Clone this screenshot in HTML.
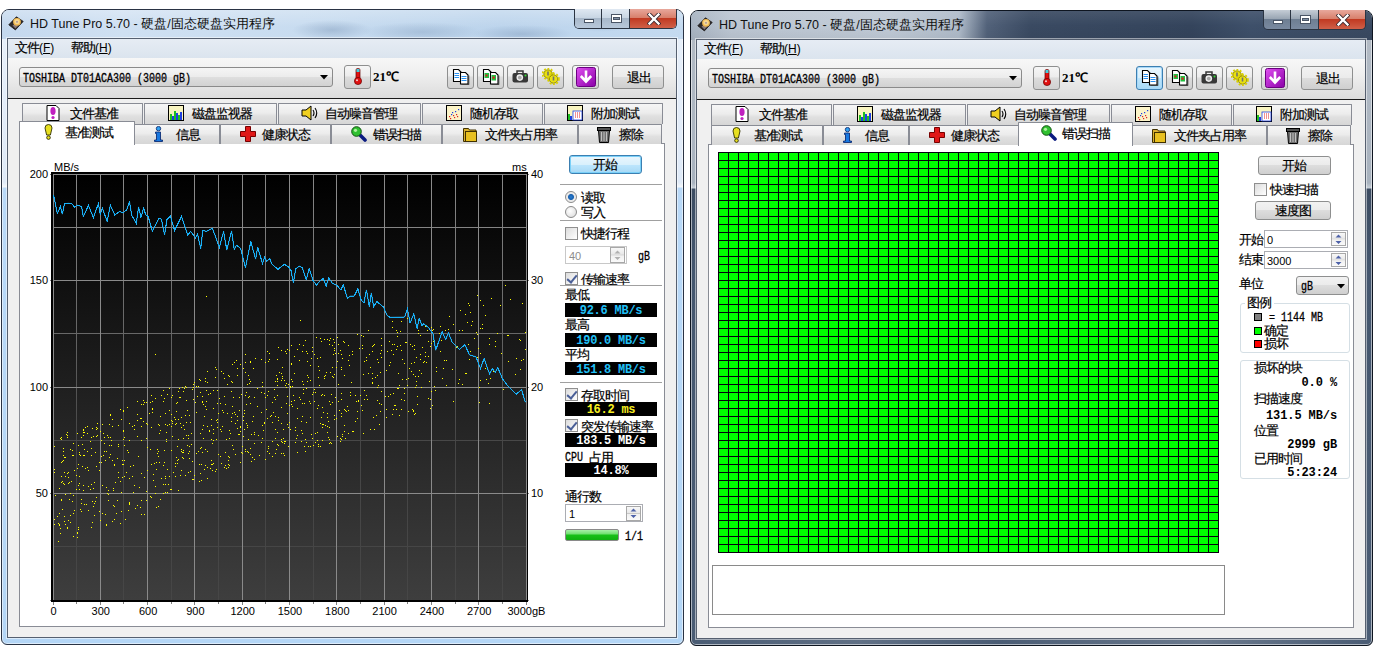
<!DOCTYPE html><html><head><meta charset="utf-8"><style>

*{box-sizing:border-box;margin:0;padding:0}
html,body{width:1385px;height:657px;overflow:hidden;background:#fff;font-family:"Liberation Sans",sans-serif;font-size:12px;color:#000}
.a{position:absolute}
.win{position:absolute;left:0;top:0;width:1385px;height:657px}
.frame{position:absolute;left:1px;top:9px;width:683px;height:636px;border:1px solid #1d2633;border-radius:8px 8px 6px 6px;overflow:hidden;box-shadow:inset 0 0 0 1px rgba(255,255,255,0.55)}
.client{position:absolute;left:7px;top:38px;width:670px;height:600px;border:1px solid #566070;background:#f0f0f0;box-shadow:0 0 0 1px rgba(255,255,255,0.5)}
.cj{font-family:"Liberation Sans",sans-serif;font-size:13px;line-height:12px;letter-spacing:-1px;white-space:nowrap;-webkit-text-stroke:0.2px #000}
.as{font-size:12px;letter-spacing:0;-webkit-text-stroke:0}
.mono{font-family:"Liberation Mono",monospace;white-space:nowrap}
.tbtn{position:absolute;height:24px;width:27px;border:1px solid #8e8f8f;border-radius:3px;background:linear-gradient(#f6f6f6 0%,#ececec 45%,#dcdcdc 50%,#d0d0d0 100%)}
.btn{position:absolute;border:1px solid #707070;border-radius:3px;background:linear-gradient(#f2f2f2 0%,#ebebeb 49%,#dddddd 50%,#cfcfcf 100%);text-align:center}
.tab{position:absolute;border:1px solid #898c95;border-bottom:none;background:linear-gradient(#f6f6f6 0%,#ececec 45%,#e0e0e0 60%,#d6d6d6 100%);border-radius:1px 1px 0 0}
.tab.sel{background:#fff}
.panel{position:absolute;border:1px solid #898c95;background:#fff}
.blk{position:absolute;background:#000;font-family:"Liberation Mono",monospace;font-weight:bold;font-size:12px;line-height:16px;letter-spacing:-0.25px;text-align:center;white-space:pre;overflow:hidden}
.chk{position:absolute;width:13px;height:13px;border:1px solid #8f8f8f;background:linear-gradient(135deg,#dcdcdc,#fff)}
.chk.on::after{content:"";position:absolute;left:3px;top:0px;width:4px;height:8px;border:solid #4a5f97;border-width:0 2px 2px 0;transform:rotate(40deg)}
.sep{position:absolute;height:2px;background:#a0a0a0;border-bottom:1px solid #fff}
.edit{position:absolute;border:1px solid #abadb3;background:#fff}
.spin{position:absolute;width:15px;background:linear-gradient(#f4f4f4,#dedede);border-left:1px solid #c0c0c0}

</style></head><body>
<div class="win" style="left:0px;top:0px">
<div class="frame" style="border-color:#2a3344;background:linear-gradient(#e8f0fa 0px,#dfeaf8 172px,#f4f8fc 177px,#b9d9f8 178px,#b4d6f6 100%)">
<div class="a" style="left:0;top:0;width:681px;height:29px;background:radial-gradient(ellipse 40px 10px at 330px 20px,rgba(80,110,150,0.28),rgba(80,110,150,0)),radial-gradient(ellipse 60px 10px at 420px 22px,rgba(80,110,150,0.22),rgba(80,110,150,0)),radial-gradient(ellipse 50px 9px at 520px 24px,rgba(80,110,150,0.25),rgba(80,110,150,0)),radial-gradient(ellipse 30px 8px at 600px 14px,rgba(80,110,150,0.2),rgba(80,110,150,0)),linear-gradient(rgba(255,255,255,0.25),rgba(255,255,255,0) 60%),linear-gradient(90deg,#c4d8ee 0,#cfe0f2 120px,#c8dcf0 300px,#bcd4ec 500px,#c4daf0 100%)"></div>
</div>
<div class="a" style="left:574px;top:9px;width:103px;height:20px;border:1px solid #2b3442;border-top:none;border-radius:0 0 5px 5px;overflow:hidden;z-index:5">
<div class="a" style="left:0;top:0;width:27px;height:19px;background:linear-gradient(#dfe8f2 0%,#c9d6e4 45%,#a8b8ca 50%,#b8c8da 100%);border-right:1px solid #2b3442"></div>
<div class="a" style="left:27px;top:0;width:28px;height:19px;background:linear-gradient(#dfe8f2 0%,#c9d6e4 45%,#a8b8ca 50%,#b8c8da 100%);border-right:1px solid #2b3442"></div>
<div class="a" style="left:55px;top:0;width:47px;height:19px;background:linear-gradient(#e8a89c 0%,#d8806c 45%,#c13a22 50%,#d06048 100%)"></div>
<div class="a" style="left:9px;top:10px;width:10px;height:4px;background:#fff;border:1px solid #4a5566"></div>
<div class="a" style="left:36px;top:5px;width:11px;height:9px;border:1px solid #4a5566;background:#fff"><div class="a" style="left:1px;top:2px;width:7px;height:3px;background:#8090a4;border:1px solid #4a5566"></div></div>
<svg class="a" style="left:72px;top:4px" width="14" height="12" viewBox="0 0 14 12"><path d="M2.5,1.5 L11.5,10.5 M11.5,1.5 L2.5,10.5" stroke="#3a2a30" stroke-width="4" stroke-linecap="square"/><path d="M2.5,1.5 L11.5,10.5 M11.5,1.5 L2.5,10.5" stroke="#fff" stroke-width="2.4" stroke-linecap="square"/></svg>
</div>
<svg class="a" style="left:8px;top:16px" width="16" height="15" viewBox="0 0 16 15">
<polygon points="8.4,0.8 15.2,5.4 7.4,13.9 0.8,8.8" fill="#2e2a2a" stroke="#1a1818" stroke-width="0.8" stroke-linejoin="round"/>
<polygon points="4.5,9.5 8,7.5 10,10 7.4,12.6" fill="#8a7a78"/>
<circle cx="9" cy="5.8" r="3.9" fill="#f0b850"/>
<circle cx="9" cy="5.6" r="2.6" fill="#f8d890"/>
<circle cx="9" cy="5.8" r="0.9" fill="#9a8aa0"/>
</svg>
<div class="a" style="left:30px;top:17px;white-space:nowrap;line-height:14px;color:#111"><span style="font-size:12.5px">HD Tune Pro 5.70 - </span><span style="font-size:12.5px">硬盘/固态硬盘实用程序</span></div>
<div class="client"></div>
<div class="a" style="left:8px;top:39px;width:668px;height:19px;background:linear-gradient(#e6ecf4,#dbe4ee)"></div>
<div class="a cj" style="left:15px;top:42px;">文件<span class="as">(</span><u><span class="as">F</span></u><span class="as">)</span></div>
<div class="a cj" style="left:71px;top:42px;">帮助<span class="as">(</span><u><span class="as">H</span></u><span class="as">)</span></div>
<div class="a" style="left:8px;top:58px;width:668px;height:41px;background:linear-gradient(#f7f7f7 0%,#efefef 40%,#dcdcdc 100%);border-bottom:1px solid #1a1a1a"></div>
<div class="a" style="left:19px;top:67px;width:314px;height:20px;border:1px solid #8b8b8b;border-radius:3px;background:linear-gradient(#f5f5f5 0%,#ececec 48%,#dedede 52%,#d2d2d2 100%)"></div>
<div class="a mono" style="left:23px;top:73px;font-size:12px;line-height:12px;transform:scaleX(0.833);transform-origin:0 0;letter-spacing:0px;-webkit-text-stroke:0.3px #000">TOSHIBA DT01ACA300 (3000 gB)</div>
<svg class="a" style="left:320px;top:75px" width="8" height="5"><path d="M0,0h8l-4,4.5z" fill="#000"/></svg>
<div class="tbtn" style="left:344px;top:65px"></div>
<svg class="a" style="left:353px;top:68px" width="10" height="17" viewBox="0 0 10 17">
<rect x="3" y="0.5" width="4" height="12" rx="1.5" fill="#e01010" stroke="#600" stroke-width="0.7"/>
<rect x="3.5" y="1" width="3" height="3" fill="#40d0e0"/>
<circle cx="5" cy="13" r="3.6" fill="#e01010" stroke="#600" stroke-width="0.7"/>
<circle cx="4" cy="12.3" r="1" fill="#fff" opacity="0.8"/>
</svg>
<div class="a" style="left:373px;top:70px;font-family:'Liberation Serif',serif;font-weight:bold;font-size:13px;line-height:13px">21℃</div>
<div class="tbtn" style="left:447px;top:65px;"></div>
<div class="tbtn" style="left:477px;top:65px;"></div>
<div class="tbtn" style="left:507px;top:65px;"></div>
<div class="tbtn" style="left:537px;top:65px;"></div>
<div class="tbtn" style="left:572px;top:65px;"></div>
<svg class="a" style="left:452px;top:68px" width="18" height="17" viewBox="0 0 18 17">
<path d="M1.5,1.5h5l2.5,2.5v9.5h-7.5z" fill="#fff" stroke="#000" stroke-width="1.1"/>
<path d="M8.5,4.5h5l2.5,2.5v9h-7.5z" fill="#fff" stroke="#000" stroke-width="1.1"/>
<path d="M16.8,7.5v9.2h-7.5" stroke="#303030" stroke-width="0.9" fill="none"/>
<path d="M2.5,5.5h4.5M2.5,7.5h4.5M2.5,9.5h4.5M9.5,8.5h5M9.5,10.5h5M9.5,12.5h5" stroke="#2890f0" stroke-width="1.1" fill="none"/>
</svg>
<svg class="a" style="left:482px;top:68px" width="18" height="17" viewBox="0 0 18 17">
<path d="M1.5,1.5h5l2.5,2.5v9.5h-7.5z" fill="#fff" stroke="#000" stroke-width="1.1"/>
<path d="M8.5,4.5h5l2.5,2.5v9h-7.5z" fill="#fff" stroke="#000" stroke-width="1.1"/>
<path d="M16.8,7.5v9.2h-7.5" stroke="#303030" stroke-width="0.9" fill="none"/>
<rect x="2.5" y="5" width="4.5" height="5" fill="#20c040"/><rect x="3.5" y="6.5" width="2" height="2" fill="#e02020"/><rect x="9.5" y="7" width="4.5" height="5.5" fill="#20c040"/><rect x="10.5" y="8.5" width="2.2" height="2.2" fill="#e02020"/>
</svg>
<svg class="a" style="left:512px;top:69px" width="17" height="14" viewBox="0 0 17 14">
<rect x="0.5" y="4" width="15.5" height="9.5" rx="2" fill="#383838"/>
<path d="M5,4.5v-2.5h6v2.5" stroke="#383838" stroke-width="1.5" fill="none"/>
<circle cx="7.8" cy="8.6" r="3.3" fill="#f0f0f0"/><circle cx="7.8" cy="8.6" r="1.9" fill="#a8a8a8"/>
<circle cx="13.5" cy="6.5" r="1" fill="#30e030"/>
</svg>
<svg class="a" style="left:542px;top:68px" width="18" height="17" viewBox="0 0 18 17">
<circle cx="6" cy="6" r="4.2" fill="#e8e010" stroke="#7a7000" stroke-width="0.8"/>
<circle cx="6" cy="6" r="5.3" fill="none" stroke="#d8d000" stroke-width="2" stroke-dasharray="1.8 1.6"/>
<circle cx="11.5" cy="11" r="4.2" fill="#e8e010" stroke="#7a7000" stroke-width="0.8"/>
<circle cx="11.5" cy="11" r="5.3" fill="none" stroke="#d8d000" stroke-width="2" stroke-dasharray="1.8 1.6"/>
<path d="M6,3.5v4M11.5,8.5v4" stroke="#707070" stroke-width="1.6"/>
</svg>
<svg class="a" style="left:576px;top:67px" width="20" height="20" viewBox="0 0 20 20">
<defs><linearGradient id="pg" x1="0" y1="0" x2="1" y2="1"><stop offset="0" stop-color="#e050f0"/><stop offset="1" stop-color="#8a00a8"/></linearGradient></defs>
<rect x="0.5" y="0.5" width="19" height="19" rx="2" fill="url(#pg)" stroke="#6a0080"/>
<path d="M10,3.5v10.5M4.8,9l5.2,5.5l5.2,-5.5" stroke="#fff" stroke-width="2.6" fill="none" stroke-linejoin="miter"/>
</svg>
<div class="btn" style="left:612px;top:65px;width:52px;height:24px;border-color:#8e8f8f"></div>
<div class="a cj" style="left:627px;top:71px;font-size:13px;line-height:13px">退出</div>
<div class="tab" style="left:22px;top:103px;width:121px;height:21px"></div>
<svg class="a" style="left:46px;top:105px" width="14" height="16" viewBox="0 0 14 16">
<path d="M1,0.5h9l3,3v12H1z" fill="#fff" stroke="#000"/>
<ellipse cx="7" cy="6" rx="2.6" ry="4" fill="#c020c0"/><circle cx="7" cy="12.5" r="1.6" fill="#c020c0"/>
</svg>
<div class="a cj" style="left:70px;top:108px;">文件基准</div>
<div class="tab" style="left:144px;top:103px;width:133px;height:21px"></div>
<svg class="a" style="left:168px;top:105px" width="16" height="16" viewBox="0 0 16 16">
<rect x="0.5" y="0.5" width="15" height="15" fill="#f8f4c0" stroke="#000"/>
<rect x="2" y="9" width="2" height="6" fill="#20c020"/><rect x="4" y="11" width="2" height="4" fill="#2040e0"/>
<rect x="6" y="6" width="2" height="9" fill="#20c020"/><rect x="8" y="8" width="2" height="7" fill="#2040e0"/>
<rect x="10" y="10" width="2" height="5" fill="#20c020"/><rect x="12" y="7" width="2" height="8" fill="#2040e0"/>
</svg>
<div class="a cj" style="left:192px;top:108px;">磁盘监视器</div>
<div class="tab" style="left:278px;top:103px;width:143px;height:21px"></div>
<svg class="a" style="left:301px;top:105px" width="17" height="16" viewBox="0 0 17 16">
<path d="M1,5h4l5,-4v14l-5,-4H1z" fill="#f0d020" stroke="#000" stroke-width="1"/>
<path d="M12,5q2,3 0,6M14,3q3.5,5 0,10" stroke="#000" stroke-width="1.1" fill="none"/>
</svg>
<div class="a cj" style="left:325px;top:108px;">自动噪音管理</div>
<div class="tab" style="left:422px;top:103px;width:121px;height:21px"></div>
<svg class="a" style="left:446px;top:105px" width="16" height="16" viewBox="0 0 16 16">
<rect x="0.5" y="0.5" width="15" height="15" fill="#fbf3c8" stroke="#000"/><rect x="3" y="11" width="1.2" height="1.2" fill="#e02020"/><rect x="5" y="9" width="1.2" height="1.2" fill="#2040e0"/><rect x="7" y="10" width="1.2" height="1.2" fill="#e02020"/><rect x="9" y="6" width="1.2" height="1.2" fill="#2040e0"/><rect x="10" y="9" width="1.2" height="1.2" fill="#e02020"/><rect x="12" y="4" width="1.2" height="1.2" fill="#2040e0"/><rect x="4" y="13" width="1.2" height="1.2" fill="#e02020"/><rect x="8" y="12" width="1.2" height="1.2" fill="#e02020"/><rect x="11" y="11" width="1.2" height="1.2" fill="#e02020"/><rect x="6" y="7" width="1.2" height="1.2" fill="#2040e0"/>
</svg>
<div class="a cj" style="left:470px;top:108px;">随机存取</div>
<div class="tab" style="left:544px;top:103px;width:119px;height:21px"></div>
<svg class="a" style="left:567px;top:105px" width="16" height="16" viewBox="0 0 16 16">
<rect x="0.5" y="0.5" width="15" height="15" fill="#f8f4c0" stroke="#000"/>
<rect x="1" y="9" width="2" height="6" fill="#20c020"/><rect x="3" y="11" width="2" height="4" fill="#2040e0"/>
<rect x="6" y="6" width="9" height="9" fill="#fff" stroke="#2040e0" stroke-width="0.8"/>
<path d="M8,8h1M10,8h1M12,8h1M8,10h1M10,10h1M12,10h1M8,12h1M10,12h1M12,12h1" stroke="#e02020" stroke-width="1"/>
</svg>
<div class="a cj" style="left:591px;top:108px;">附加测试</div>
<div class="panel" style="left:19px;top:143px;width:646px;height:484px"></div>
<svg class="a" style="left:0;top:0" width="680" height="657" viewBox="0 0 680 657">
<defs><linearGradient id="bg" x1="0" y1="0" x2="0" y2="1"><stop offset="0" stop-color="#000"/><stop offset="1" stop-color="#3e3e3e"/></linearGradient><linearGradient id="mg" gradientUnits="userSpaceOnUse" x1="0" y1="174" x2="0" y2="600"><stop offset="0" stop-color="#888888"/><stop offset="0.35" stop-color="#686868"/><stop offset="0.62" stop-color="#464646"/><stop offset="1" stop-color="#464646"/></linearGradient></defs>
<rect x="51" y="172" width="477" height="430" fill="#000"/>
<rect x="53" y="174" width="473" height="426" fill="url(#bg)"/>
<line x1="76.5" y1="174" x2="76.5" y2="600" stroke="url(#mg)" stroke-width="1"/>
<line x1="123.5" y1="174" x2="123.5" y2="600" stroke="url(#mg)" stroke-width="1"/>
<line x1="171.5" y1="174" x2="171.5" y2="600" stroke="url(#mg)" stroke-width="1"/>
<line x1="218.5" y1="174" x2="218.5" y2="600" stroke="url(#mg)" stroke-width="1"/>
<line x1="265.5" y1="174" x2="265.5" y2="600" stroke="url(#mg)" stroke-width="1"/>
<line x1="313.5" y1="174" x2="313.5" y2="600" stroke="url(#mg)" stroke-width="1"/>
<line x1="360.5" y1="174" x2="360.5" y2="600" stroke="url(#mg)" stroke-width="1"/>
<line x1="407.5" y1="174" x2="407.5" y2="600" stroke="url(#mg)" stroke-width="1"/>
<line x1="455.5" y1="174" x2="455.5" y2="600" stroke="url(#mg)" stroke-width="1"/>
<line x1="502.5" y1="174" x2="502.5" y2="600" stroke="url(#mg)" stroke-width="1"/>
<line x1="53" y1="227.5" x2="526" y2="227.5" stroke="#848484" stroke-width="1"/>
<line x1="53" y1="333.5" x2="526" y2="333.5" stroke="#686868" stroke-width="1"/>
<line x1="53" y1="440.5" x2="526" y2="440.5" stroke="#484848" stroke-width="1"/>
<line x1="53" y1="546.5" x2="526" y2="546.5" stroke="#464646" stroke-width="1"/>
<line x1="53.5" y1="174" x2="53.5" y2="600" stroke="#8a8a8a" stroke-width="1"/>
<line x1="100.5" y1="174" x2="100.5" y2="600" stroke="#8a8a8a" stroke-width="1"/>
<line x1="147.5" y1="174" x2="147.5" y2="600" stroke="#8a8a8a" stroke-width="1"/>
<line x1="194.5" y1="174" x2="194.5" y2="600" stroke="#8a8a8a" stroke-width="1"/>
<line x1="242.5" y1="174" x2="242.5" y2="600" stroke="#8a8a8a" stroke-width="1"/>
<line x1="289.5" y1="174" x2="289.5" y2="600" stroke="#8a8a8a" stroke-width="1"/>
<line x1="336.5" y1="174" x2="336.5" y2="600" stroke="#8a8a8a" stroke-width="1"/>
<line x1="384.5" y1="174" x2="384.5" y2="600" stroke="#8a8a8a" stroke-width="1"/>
<line x1="431.5" y1="174" x2="431.5" y2="600" stroke="#8a8a8a" stroke-width="1"/>
<line x1="478.5" y1="174" x2="478.5" y2="600" stroke="#8a8a8a" stroke-width="1"/>
<line x1="526.5" y1="174" x2="526.5" y2="600" stroke="#8a8a8a" stroke-width="1"/>
<line x1="53" y1="174.5" x2="527" y2="174.5" stroke="#8a8a8a" stroke-width="1"/>
<line x1="53" y1="280.5" x2="527" y2="280.5" stroke="#8a8a8a" stroke-width="1"/>
<line x1="53" y1="387.5" x2="527" y2="387.5" stroke="#8a8a8a" stroke-width="1"/>
<line x1="53" y1="493.5" x2="527" y2="493.5" stroke="#8a8a8a" stroke-width="1"/>
<line x1="53" y1="600.5" x2="527" y2="600.5" stroke="#8a8a8a" stroke-width="1"/>
<line x1="53.5" y1="602" x2="53.5" y2="605" stroke="#808080" stroke-width="1"/>
<line x1="76.5" y1="602" x2="76.5" y2="604" stroke="#808080" stroke-width="1"/>
<line x1="100.5" y1="602" x2="100.5" y2="605" stroke="#808080" stroke-width="1"/>
<line x1="123.5" y1="602" x2="123.5" y2="604" stroke="#808080" stroke-width="1"/>
<line x1="147.5" y1="602" x2="147.5" y2="605" stroke="#808080" stroke-width="1"/>
<line x1="171.5" y1="602" x2="171.5" y2="604" stroke="#808080" stroke-width="1"/>
<line x1="194.5" y1="602" x2="194.5" y2="605" stroke="#808080" stroke-width="1"/>
<line x1="218.5" y1="602" x2="218.5" y2="604" stroke="#808080" stroke-width="1"/>
<line x1="242.5" y1="602" x2="242.5" y2="605" stroke="#808080" stroke-width="1"/>
<line x1="265.5" y1="602" x2="265.5" y2="604" stroke="#808080" stroke-width="1"/>
<line x1="289.5" y1="602" x2="289.5" y2="605" stroke="#808080" stroke-width="1"/>
<line x1="313.5" y1="602" x2="313.5" y2="604" stroke="#808080" stroke-width="1"/>
<line x1="336.5" y1="602" x2="336.5" y2="605" stroke="#808080" stroke-width="1"/>
<line x1="360.5" y1="602" x2="360.5" y2="604" stroke="#808080" stroke-width="1"/>
<line x1="384.5" y1="602" x2="384.5" y2="605" stroke="#808080" stroke-width="1"/>
<line x1="407.5" y1="602" x2="407.5" y2="604" stroke="#808080" stroke-width="1"/>
<line x1="431.5" y1="602" x2="431.5" y2="605" stroke="#808080" stroke-width="1"/>
<line x1="455.5" y1="602" x2="455.5" y2="604" stroke="#808080" stroke-width="1"/>
<line x1="478.5" y1="602" x2="478.5" y2="605" stroke="#808080" stroke-width="1"/>
<line x1="502.5" y1="602" x2="502.5" y2="604" stroke="#808080" stroke-width="1"/>
<line x1="526.5" y1="602" x2="526.5" y2="605" stroke="#808080" stroke-width="1"/>
<line x1="50" y1="174.5" x2="51" y2="174.5" stroke="#808080" stroke-width="1"/>
<line x1="528" y1="174.5" x2="529" y2="174.5" stroke="#808080" stroke-width="1"/>
<line x1="50" y1="280.5" x2="51" y2="280.5" stroke="#808080" stroke-width="1"/>
<line x1="528" y1="280.5" x2="529" y2="280.5" stroke="#808080" stroke-width="1"/>
<line x1="50" y1="387.5" x2="51" y2="387.5" stroke="#808080" stroke-width="1"/>
<line x1="528" y1="387.5" x2="529" y2="387.5" stroke="#808080" stroke-width="1"/>
<line x1="50" y1="493.5" x2="51" y2="493.5" stroke="#808080" stroke-width="1"/>
<line x1="528" y1="493.5" x2="529" y2="493.5" stroke="#808080" stroke-width="1"/>
<line x1="50" y1="600.5" x2="51" y2="600.5" stroke="#808080" stroke-width="1"/>
<line x1="528" y1="600.5" x2="529" y2="600.5" stroke="#808080" stroke-width="1"/>
<rect x="51" y="172" width="477" height="2" fill="#000"/>
<rect x="51" y="600" width="477" height="2" fill="#000"/>
<rect x="51" y="172" width="2" height="430" fill="#000"/>
<rect x="527" y="172" width="1" height="430" fill="#000"/>
<path d="M267,451h1v1h-1zM273,412h1v1h-1zM141,473h1v1h-1zM428,341h1v1h-1zM96,497h1v1h-1zM73,536h1v1h-1zM362,345h1v1h-1zM61,439h1v1h-1zM143,400h1v1h-1zM272,441h1v1h-1zM299,397h1v1h-1zM366,357h1v1h-1zM202,402h1v1h-1zM87,467h1v1h-1zM453,401h1v1h-1zM453,324h1v1h-1zM88,510h1v1h-1zM181,417h1v1h-1zM109,424h1v1h-1zM82,444h1v1h-1zM317,358h1v1h-1zM399,385h1v1h-1zM108,437h1v1h-1zM181,470h1v1h-1zM197,396h1v1h-1zM240,426h1v1h-1zM101,440h1v1h-1zM175,419h1v1h-1zM193,384h1v1h-1zM329,401h1v1h-1zM229,465h1v1h-1zM282,442h1v1h-1zM140,507h1v1h-1zM440,326h1v1h-1zM146,500h1v1h-1zM338,344h1v1h-1zM72,455h1v1h-1zM386,409h1v1h-1zM335,353h1v1h-1zM394,344h1v1h-1zM318,405h1v1h-1zM186,400h1v1h-1zM61,482h1v1h-1zM82,466h1v1h-1zM324,376h1v1h-1zM364,390h1v1h-1zM120,409h1v1h-1zM508,361h1v1h-1zM281,380h1v1h-1zM525,349h1v1h-1zM401,399h1v1h-1zM485,368h1v1h-1zM250,448h1v1h-1zM324,378h1v1h-1zM329,344h1v1h-1zM237,420h1v1h-1zM261,359h1v1h-1zM408,378h1v1h-1zM281,423h1v1h-1zM288,446h1v1h-1zM174,417h1v1h-1zM374,344h1v1h-1zM262,386h1v1h-1zM368,373h1v1h-1zM469,359h1v1h-1zM203,425h1v1h-1zM184,429h1v1h-1zM183,425h1v1h-1zM349,365h1v1h-1zM267,351h1v1h-1zM465,373h1v1h-1zM323,424h1v1h-1zM63,483h1v1h-1zM65,457h1v1h-1zM120,481h1v1h-1zM264,422h1v1h-1zM377,375h1v1h-1zM138,456h1v1h-1zM391,350h1v1h-1zM217,422h1v1h-1zM344,375h1v1h-1zM95,501h1v1h-1zM115,482h1v1h-1zM322,424h1v1h-1zM361,405h1v1h-1zM392,414h1v1h-1zM307,375h1v1h-1zM218,413h1v1h-1zM313,392h1v1h-1zM67,437h1v1h-1zM431,343h1v1h-1zM425,326h1v1h-1zM297,435h1v1h-1zM286,353h1v1h-1zM158,424h1v1h-1zM398,373h1v1h-1zM201,464h1v1h-1zM479,387h1v1h-1zM324,395h1v1h-1zM291,345h1v1h-1zM243,416h1v1h-1zM285,351h1v1h-1zM308,446h1v1h-1zM489,344h1v1h-1zM113,505h1v1h-1zM203,438h1v1h-1zM490,378h1v1h-1zM64,457h1v1h-1zM378,362h1v1h-1zM346,411h1v1h-1zM111,440h1v1h-1zM147,447h1v1h-1zM231,417h1v1h-1zM129,478h1v1h-1zM355,421h1v1h-1zM342,358h1v1h-1zM480,328h1v1h-1zM489,403h1v1h-1zM472,321h1v1h-1zM396,330h1v1h-1zM446,385h1v1h-1zM113,490h1v1h-1zM62,509h1v1h-1zM108,500h1v1h-1zM291,363h1v1h-1zM87,426h1v1h-1zM314,401h1v1h-1zM123,430h1v1h-1zM491,298h1v1h-1zM414,362h1v1h-1zM297,408h1v1h-1zM60,528h1v1h-1zM139,487h1v1h-1zM245,372h1v1h-1zM295,442h1v1h-1zM244,410h1v1h-1zM175,466h1v1h-1zM245,451h1v1h-1zM381,404h1v1h-1zM245,362h1v1h-1zM215,367h1v1h-1zM221,431h1v1h-1zM163,465h1v1h-1zM213,429h1v1h-1zM305,451h1v1h-1zM357,411h1v1h-1zM516,358h1v1h-1zM402,359h1v1h-1zM77,468h1v1h-1zM100,520h1v1h-1zM313,445h1v1h-1zM322,407h1v1h-1zM436,367h1v1h-1zM412,409h1v1h-1zM129,423h1v1h-1zM287,349h1v1h-1zM302,381h1v1h-1zM188,438h1v1h-1zM187,410h1v1h-1zM60,438h1v1h-1zM127,450h1v1h-1zM77,533h1v1h-1zM88,470h1v1h-1zM279,372h1v1h-1zM301,421h1v1h-1zM275,438h1v1h-1zM338,401h1v1h-1zM269,353h1v1h-1zM303,389h1v1h-1zM369,354h1v1h-1zM328,421h1v1h-1zM304,446h1v1h-1zM400,331h1v1h-1zM348,360h1v1h-1zM377,387h1v1h-1zM352,351h1v1h-1zM171,489h1v1h-1zM468,303h1v1h-1zM181,449h1v1h-1zM102,424h1v1h-1zM94,482h1v1h-1zM351,382h1v1h-1zM153,480h1v1h-1zM449,316h1v1h-1zM416,357h1v1h-1zM175,424h1v1h-1zM207,451h1v1h-1zM228,456h1v1h-1zM91,484h1v1h-1zM282,378h1v1h-1zM420,335h1v1h-1zM366,360h1v1h-1zM396,349h1v1h-1zM121,492h1v1h-1zM226,439h1v1h-1zM322,440h1v1h-1zM433,341h1v1h-1zM242,453h1v1h-1zM171,426h1v1h-1zM225,404h1v1h-1zM146,491h1v1h-1zM309,401h1v1h-1zM137,505h1v1h-1zM186,435h1v1h-1zM310,446h1v1h-1zM361,335h1v1h-1zM312,347h1v1h-1zM92,522h1v1h-1zM93,436h1v1h-1zM406,342h1v1h-1zM158,451h1v1h-1zM414,349h1v1h-1zM287,424h1v1h-1zM247,427h1v1h-1zM301,430h1v1h-1zM253,368h1v1h-1zM231,381h1v1h-1zM254,459h1v1h-1zM81,437h1v1h-1zM359,348h1v1h-1zM83,490h1v1h-1zM483,305h1v1h-1zM141,426h1v1h-1zM392,344h1v1h-1zM141,418h1v1h-1zM411,371h1v1h-1zM439,333h1v1h-1zM215,471h1v1h-1zM281,350h1v1h-1zM235,414h1v1h-1zM183,452h1v1h-1zM166,441h1v1h-1zM229,438h1v1h-1zM340,350h1v1h-1zM205,465h1v1h-1zM297,452h1v1h-1zM179,397h1v1h-1zM417,396h1v1h-1zM92,501h1v1h-1zM99,470h1v1h-1zM458,383h1v1h-1zM250,362h1v1h-1zM444,360h1v1h-1zM302,433h1v1h-1zM200,380h1v1h-1zM198,451h1v1h-1zM223,373h1v1h-1zM240,462h1v1h-1zM59,513h1v1h-1zM166,439h1v1h-1zM58,523h1v1h-1zM151,427h1v1h-1zM231,391h1v1h-1zM213,440h1v1h-1zM175,466h1v1h-1zM209,430h1v1h-1zM395,405h1v1h-1zM97,428h1v1h-1zM373,345h1v1h-1zM243,420h1v1h-1zM96,436h1v1h-1zM112,419h1v1h-1zM295,427h1v1h-1zM441,340h1v1h-1zM248,397h1v1h-1zM341,369h1v1h-1zM215,377h1v1h-1zM232,445h1v1h-1zM128,510h1v1h-1zM312,394h1v1h-1zM120,523h1v1h-1zM297,435h1v1h-1zM147,470h1v1h-1zM147,424h1v1h-1zM326,372h1v1h-1zM272,456h1v1h-1zM118,472h1v1h-1zM318,366h1v1h-1zM111,445h1v1h-1zM477,357h1v1h-1zM446,360h1v1h-1zM90,441h1v1h-1zM364,399h1v1h-1zM402,379h1v1h-1zM433,329h1v1h-1zM274,389h1v1h-1zM322,394h1v1h-1zM178,419h1v1h-1zM356,401h1v1h-1zM122,477h1v1h-1zM275,416h1v1h-1zM379,403h1v1h-1zM283,438h1v1h-1zM457,346h1v1h-1zM321,395h1v1h-1zM301,441h1v1h-1zM205,449h1v1h-1zM336,367h1v1h-1zM334,348h1v1h-1zM264,393h1v1h-1zM78,485h1v1h-1zM166,432h1v1h-1zM165,492h1v1h-1zM462,384h1v1h-1zM158,456h1v1h-1zM480,380h1v1h-1zM112,521h1v1h-1zM54,469h1v1h-1zM207,467h1v1h-1zM438,343h1v1h-1zM330,338h1v1h-1zM478,348h1v1h-1zM277,379h1v1h-1zM146,438h1v1h-1zM277,444h1v1h-1zM523,359h1v1h-1zM144,402h1v1h-1zM104,451h1v1h-1zM390,394h1v1h-1zM91,455h1v1h-1zM389,341h1v1h-1zM165,478h1v1h-1zM229,457h1v1h-1zM332,367h1v1h-1zM184,388h1v1h-1zM303,345h1v1h-1zM337,361h1v1h-1zM433,337h1v1h-1zM410,344h1v1h-1zM312,438h1v1h-1zM520,340h1v1h-1zM408,411h1v1h-1zM289,405h1v1h-1zM358,400h1v1h-1zM423,362h1v1h-1zM299,360h1v1h-1zM421,373h1v1h-1zM165,476h1v1h-1zM165,413h1v1h-1zM327,339h1v1h-1zM335,397h1v1h-1zM465,314h1v1h-1zM62,481h1v1h-1zM262,438h1v1h-1zM88,486h1v1h-1zM310,365h1v1h-1zM123,411h1v1h-1zM202,429h1v1h-1zM178,391h1v1h-1zM441,332h1v1h-1zM129,502h1v1h-1zM425,352h1v1h-1zM226,468h1v1h-1zM73,513h1v1h-1zM519,339h1v1h-1zM405,342h1v1h-1zM474,338h1v1h-1zM194,382h1v1h-1zM70,515h1v1h-1zM400,345h1v1h-1zM314,389h1v1h-1zM213,433h1v1h-1zM72,501h1v1h-1zM81,503h1v1h-1zM239,397h1v1h-1zM422,347h1v1h-1zM140,418h1v1h-1zM150,449h1v1h-1zM199,481h1v1h-1zM150,402h1v1h-1zM380,353h1v1h-1zM62,461h1v1h-1zM239,434h1v1h-1zM180,397h1v1h-1zM482,328h1v1h-1zM235,454h1v1h-1zM207,426h1v1h-1zM79,452h1v1h-1zM73,495h1v1h-1zM68,477h1v1h-1zM310,417h1v1h-1zM176,457h1v1h-1zM123,439h1v1h-1zM390,362h1v1h-1zM462,330h1v1h-1zM216,369h1v1h-1zM65,494h1v1h-1zM194,475h1v1h-1zM156,469h1v1h-1zM164,398h1v1h-1zM255,358h1v1h-1zM234,412h1v1h-1zM186,422h1v1h-1zM278,420h1v1h-1zM167,425h1v1h-1zM253,416h1v1h-1zM385,396h1v1h-1zM64,472h1v1h-1zM83,430h1v1h-1zM287,396h1v1h-1zM207,371h1v1h-1zM217,427h1v1h-1zM177,402h1v1h-1zM275,453h1v1h-1zM225,465h1v1h-1zM418,376h1v1h-1zM247,384h1v1h-1zM234,362h1v1h-1zM118,444h1v1h-1zM224,378h1v1h-1zM144,477h1v1h-1zM164,450h1v1h-1zM239,410h1v1h-1zM360,395h1v1h-1zM318,444h1v1h-1zM211,464h1v1h-1zM201,447h1v1h-1zM443,368h1v1h-1zM285,385h1v1h-1zM188,435h1v1h-1zM165,424h1v1h-1zM137,414h1v1h-1zM83,435h1v1h-1zM386,370h1v1h-1zM418,330h1v1h-1zM79,483h1v1h-1zM429,381h1v1h-1zM172,421h1v1h-1zM211,460h1v1h-1zM252,421h1v1h-1zM113,488h1v1h-1zM163,390h1v1h-1zM330,442h1v1h-1zM117,458h1v1h-1zM352,431h1v1h-1zM520,369h1v1h-1zM109,445h1v1h-1zM110,415h1v1h-1zM310,380h1v1h-1zM199,464h1v1h-1zM187,445h1v1h-1zM237,416h1v1h-1zM431,327h1v1h-1zM104,443h1v1h-1zM284,380h1v1h-1zM63,448h1v1h-1zM349,355h1v1h-1zM281,373h1v1h-1zM78,527h1v1h-1zM200,392h1v1h-1zM282,367h1v1h-1zM249,396h1v1h-1zM81,499h1v1h-1zM348,433h1v1h-1zM263,430h1v1h-1zM137,420h1v1h-1zM110,454h1v1h-1zM409,368h1v1h-1zM58,541h1v1h-1zM59,524h1v1h-1zM242,446h1v1h-1zM101,462h1v1h-1zM386,417h1v1h-1zM65,457h1v1h-1zM237,428h1v1h-1zM436,371h1v1h-1zM221,463h1v1h-1zM205,406h1v1h-1zM404,393h1v1h-1zM311,358h1v1h-1zM103,455h1v1h-1zM257,406h1v1h-1zM244,413h1v1h-1zM503,389h1v1h-1zM205,381h1v1h-1zM508,335h1v1h-1zM387,351h1v1h-1zM206,409h1v1h-1zM521,360h1v1h-1zM232,382h1v1h-1zM344,425h1v1h-1zM350,392h1v1h-1zM107,493h1v1h-1zM267,395h1v1h-1zM235,423h1v1h-1zM324,339h1v1h-1zM350,395h1v1h-1zM334,350h1v1h-1zM275,429h1v1h-1zM201,480h1v1h-1zM243,368h1v1h-1zM164,462h1v1h-1zM430,408h1v1h-1zM84,504h1v1h-1zM172,436h1v1h-1zM307,361h1v1h-1zM185,386h1v1h-1zM315,392h1v1h-1zM168,484h1v1h-1zM417,404h1v1h-1zM430,346h1v1h-1zM101,456h1v1h-1zM109,457h1v1h-1zM479,402h1v1h-1zM151,497h1v1h-1zM397,388h1v1h-1zM257,388h1v1h-1zM202,401h1v1h-1zM338,353h1v1h-1zM114,464h1v1h-1zM114,519h1v1h-1zM341,354h1v1h-1zM401,350h1v1h-1zM246,423h1v1h-1zM254,397h1v1h-1zM269,453h1v1h-1zM217,390h1v1h-1zM327,432h1v1h-1zM189,451h1v1h-1zM268,391h1v1h-1zM404,363h1v1h-1zM84,455h1v1h-1zM262,382h1v1h-1zM381,350h1v1h-1zM248,452h1v1h-1zM172,423h1v1h-1zM332,345h1v1h-1zM477,334h1v1h-1zM230,433h1v1h-1zM216,469h1v1h-1zM64,484h1v1h-1zM224,396h1v1h-1zM370,429h1v1h-1zM240,427h1v1h-1zM85,468h1v1h-1zM363,433h1v1h-1zM152,409h1v1h-1zM240,364h1v1h-1zM132,476h1v1h-1zM404,400h1v1h-1zM110,414h1v1h-1zM476,332h1v1h-1zM306,351h1v1h-1zM426,362h1v1h-1zM112,426h1v1h-1zM95,452h1v1h-1zM420,354h1v1h-1zM79,476h1v1h-1zM317,432h1v1h-1zM103,433h1v1h-1zM245,449h1v1h-1zM59,525h1v1h-1zM127,407h1v1h-1zM106,525h1v1h-1zM357,334h1v1h-1zM250,381h1v1h-1zM106,451h1v1h-1zM284,443h1v1h-1zM290,387h1v1h-1zM195,402h1v1h-1zM227,413h1v1h-1zM223,412h1v1h-1zM77,433h1v1h-1zM303,384h1v1h-1zM159,433h1v1h-1zM202,396h1v1h-1zM407,318h1v1h-1zM245,354h1v1h-1zM334,374h1v1h-1zM336,367h1v1h-1zM341,367h1v1h-1zM288,427h1v1h-1zM79,454h1v1h-1zM181,427h1v1h-1zM459,330h1v1h-1zM374,429h1v1h-1zM446,337h1v1h-1zM357,411h1v1h-1zM76,489h1v1h-1zM64,516h1v1h-1zM327,417h1v1h-1zM251,461h1v1h-1zM486,379h1v1h-1zM261,392h1v1h-1zM265,362h1v1h-1zM205,378h1v1h-1zM108,490h1v1h-1zM312,351h1v1h-1zM200,433h1v1h-1zM489,338h1v1h-1zM307,353h1v1h-1zM68,472h1v1h-1zM286,387h1v1h-1zM421,387h1v1h-1zM132,426h1v1h-1zM217,403h1v1h-1zM333,377h1v1h-1zM325,375h1v1h-1zM329,443h1v1h-1zM208,394h1v1h-1zM177,446h1v1h-1zM175,476h1v1h-1zM232,406h1v1h-1zM345,438h1v1h-1zM283,429h1v1h-1zM102,513h1v1h-1zM70,493h1v1h-1zM314,354h1v1h-1zM434,386h1v1h-1zM157,453h1v1h-1zM341,416h1v1h-1zM328,437h1v1h-1zM379,424h1v1h-1zM393,409h1v1h-1zM397,346h1v1h-1zM63,460h1v1h-1zM192,389h1v1h-1zM282,376h1v1h-1zM185,475h1v1h-1zM129,504h1v1h-1zM341,413h1v1h-1zM306,442h1v1h-1zM419,319h1v1h-1zM425,356h1v1h-1zM228,464h1v1h-1zM292,381h1v1h-1zM163,401h1v1h-1zM87,433h1v1h-1zM320,446h1v1h-1zM199,379h1v1h-1zM368,330h1v1h-1zM323,412h1v1h-1zM300,399h1v1h-1zM141,440h1v1h-1zM289,422h1v1h-1zM250,361h1v1h-1zM283,453h1v1h-1zM319,370h1v1h-1zM212,470h1v1h-1zM495,346h1v1h-1zM332,402h1v1h-1zM343,341h1v1h-1zM299,344h1v1h-1zM106,524h1v1h-1zM65,524h1v1h-1zM378,385h1v1h-1zM54,524h1v1h-1zM246,392h1v1h-1zM61,462h1v1h-1zM330,372h1v1h-1zM372,351h1v1h-1zM470,312h1v1h-1zM173,472h1v1h-1zM211,439h1v1h-1zM176,411h1v1h-1zM467,322h1v1h-1zM196,453h1v1h-1zM372,383h1v1h-1zM91,448h1v1h-1zM156,507h1v1h-1zM228,460h1v1h-1zM117,500h1v1h-1zM213,408h1v1h-1zM189,458h1v1h-1zM278,347h1v1h-1zM289,350h1v1h-1zM485,315h1v1h-1zM493,371h1v1h-1zM500,305h1v1h-1zM268,361h1v1h-1zM182,387h1v1h-1zM141,404h1v1h-1zM198,386h1v1h-1zM302,403h1v1h-1zM413,410h1v1h-1zM92,428h1v1h-1zM200,473h1v1h-1zM291,379h1v1h-1zM322,424h1v1h-1zM338,384h1v1h-1zM144,514h1v1h-1zM65,476h1v1h-1zM78,445h1v1h-1zM401,321h1v1h-1zM157,449h1v1h-1zM362,348h1v1h-1zM61,437h1v1h-1zM176,423h1v1h-1zM277,381h1v1h-1zM222,426h1v1h-1zM250,403h1v1h-1zM210,393h1v1h-1zM470,351h1v1h-1zM134,429h1v1h-1zM329,439h1v1h-1zM188,453h1v1h-1zM217,419h1v1h-1zM232,413h1v1h-1zM181,451h1v1h-1zM272,402h1v1h-1zM281,453h1v1h-1zM186,387h1v1h-1zM431,391h1v1h-1zM430,399h1v1h-1zM291,404h1v1h-1zM281,439h1v1h-1zM291,364h1v1h-1zM155,486h1v1h-1zM377,400h1v1h-1zM137,436h1v1h-1zM169,388h1v1h-1zM295,430h1v1h-1zM342,434h1v1h-1zM358,401h1v1h-1zM105,514h1v1h-1zM200,448h1v1h-1zM348,410h1v1h-1zM81,511h1v1h-1zM322,407h1v1h-1zM286,383h1v1h-1zM64,521h1v1h-1zM161,478h1v1h-1zM381,357h1v1h-1zM182,452h1v1h-1zM210,468h1v1h-1zM191,444h1v1h-1zM211,425h1v1h-1zM284,441h1v1h-1zM306,422h1v1h-1zM171,450h1v1h-1zM167,394h1v1h-1zM78,485h1v1h-1zM249,379h1v1h-1zM277,359h1v1h-1zM258,435h1v1h-1zM315,442h1v1h-1zM480,353h1v1h-1zM143,404h1v1h-1zM124,437h1v1h-1zM393,354h1v1h-1zM416,385h1v1h-1zM269,359h1v1h-1zM278,445h1v1h-1zM80,455h1v1h-1zM381,338h1v1h-1zM254,434h1v1h-1zM244,429h1v1h-1zM344,409h1v1h-1zM114,465h1v1h-1zM61,476h1v1h-1zM275,453h1v1h-1zM331,443h1v1h-1zM110,437h1v1h-1zM247,451h1v1h-1zM175,463h1v1h-1zM265,397h1v1h-1zM267,418h1v1h-1zM248,439h1v1h-1zM268,446h1v1h-1zM268,448h1v1h-1zM243,436h1v1h-1zM193,479h1v1h-1zM363,374h1v1h-1zM362,410h1v1h-1zM308,377h1v1h-1zM389,365h1v1h-1zM415,376h1v1h-1zM158,506h1v1h-1zM146,402h1v1h-1zM329,427h1v1h-1zM238,434h1v1h-1zM327,413h1v1h-1zM318,446h1v1h-1zM118,446h1v1h-1zM183,438h1v1h-1zM287,413h1v1h-1zM190,422h1v1h-1zM122,460h1v1h-1zM304,403h1v1h-1zM412,346h1v1h-1zM380,411h1v1h-1zM233,397h1v1h-1zM307,381h1v1h-1zM364,361h1v1h-1zM171,397h1v1h-1zM94,503h1v1h-1zM178,459h1v1h-1zM67,527h1v1h-1zM153,474h1v1h-1zM213,390h1v1h-1zM277,395h1v1h-1zM159,462h1v1h-1zM124,445h1v1h-1zM261,442h1v1h-1zM134,485h1v1h-1zM155,493h1v1h-1zM160,416h1v1h-1zM393,393h1v1h-1zM83,485h1v1h-1zM329,340h1v1h-1zM220,429h1v1h-1zM460,310h1v1h-1zM63,451h1v1h-1zM182,457h1v1h-1zM206,401h1v1h-1zM318,377h1v1h-1zM171,414h1v1h-1zM61,499h1v1h-1zM180,475h1v1h-1zM275,381h1v1h-1zM347,406h1v1h-1zM290,386h1v1h-1zM291,401h1v1h-1zM305,439h1v1h-1zM159,425h1v1h-1zM69,499h1v1h-1zM188,472h1v1h-1zM380,372h1v1h-1zM241,452h1v1h-1zM448,329h1v1h-1zM296,438h1v1h-1zM297,349h1v1h-1zM522,303h1v1h-1zM237,368h1v1h-1zM319,385h1v1h-1zM413,374h1v1h-1zM135,508h1v1h-1zM372,373h1v1h-1zM310,403h1v1h-1zM352,354h1v1h-1zM363,336h1v1h-1zM413,411h1v1h-1zM317,408h1v1h-1zM177,463h1v1h-1zM411,319h1v1h-1zM430,330h1v1h-1zM68,483h1v1h-1zM176,403h1v1h-1zM353,431h1v1h-1zM74,470h1v1h-1zM442,378h1v1h-1zM141,514h1v1h-1zM167,492h1v1h-1zM372,346h1v1h-1zM165,484h1v1h-1zM370,367h1v1h-1zM392,327h1v1h-1zM286,403h1v1h-1zM77,537h1v1h-1zM229,376h1v1h-1zM333,354h1v1h-1zM290,429h1v1h-1zM320,357h1v1h-1zM396,409h1v1h-1zM69,482h1v1h-1zM394,405h1v1h-1zM123,410h1v1h-1zM67,473h1v1h-1zM94,515h1v1h-1zM337,337h1v1h-1zM107,435h1v1h-1zM106,487h1v1h-1zM133,465h1v1h-1zM231,421h1v1h-1zM293,395h1v1h-1zM72,450h1v1h-1zM212,464h1v1h-1zM331,394h1v1h-1zM497,333h1v1h-1zM388,396h1v1h-1zM482,324h1v1h-1zM192,461h1v1h-1zM141,500h1v1h-1zM415,413h1v1h-1zM224,467h1v1h-1zM507,335h1v1h-1zM320,423h1v1h-1zM83,455h1v1h-1zM206,390h1v1h-1zM265,459h1v1h-1zM177,460h1v1h-1zM143,421h1v1h-1zM316,337h1v1h-1zM54,472h1v1h-1zM183,450h1v1h-1zM84,449h1v1h-1zM281,441h1v1h-1zM203,404h1v1h-1zM404,388h1v1h-1zM125,519h1v1h-1zM149,413h1v1h-1zM70,449h1v1h-1zM398,388h1v1h-1zM510,299h1v1h-1zM70,522h1v1h-1zM376,415h1v1h-1zM229,430h1v1h-1zM66,434h1v1h-1zM130,466h1v1h-1zM114,506h1v1h-1zM216,439h1v1h-1zM315,433h1v1h-1zM189,446h1v1h-1zM275,399h1v1h-1zM178,439h1v1h-1zM294,356h1v1h-1zM340,441h1v1h-1zM428,356h1v1h-1zM292,386h1v1h-1zM241,394h1v1h-1zM525,332h1v1h-1zM91,437h1v1h-1zM124,476h1v1h-1zM414,345h1v1h-1zM227,384h1v1h-1zM59,488h1v1h-1zM116,513h1v1h-1zM407,385h1v1h-1zM154,463h1v1h-1zM78,464h1v1h-1zM121,419h1v1h-1zM71,481h1v1h-1zM151,464h1v1h-1zM276,449h1v1h-1zM152,401h1v1h-1zM345,410h1v1h-1zM73,443h1v1h-1zM311,434h1v1h-1zM171,420h1v1h-1zM133,492h1v1h-1zM212,443h1v1h-1zM397,332h1v1h-1zM99,511h1v1h-1zM288,384h1v1h-1zM228,467h1v1h-1zM339,410h1v1h-1zM336,418h1v1h-1zM341,439h1v1h-1zM245,395h1v1h-1zM247,425h1v1h-1zM220,456h1v1h-1zM452,369h1v1h-1zM172,395h1v1h-1zM196,386h1v1h-1zM121,511h1v1h-1zM93,506h1v1h-1zM160,430h1v1h-1zM277,378h1v1h-1zM254,432h1v1h-1zM68,520h1v1h-1zM207,382h1v1h-1zM90,489h1v1h-1zM61,500h1v1h-1zM204,416h1v1h-1zM220,403h1v1h-1zM325,425h1v1h-1zM96,429h1v1h-1zM97,435h1v1h-1zM411,363h1v1h-1zM128,452h1v1h-1zM297,418h1v1h-1zM322,427h1v1h-1zM97,423h1v1h-1zM129,440h1v1h-1zM261,412h1v1h-1zM185,415h1v1h-1zM54,446h1v1h-1zM471,325h1v1h-1zM416,381h1v1h-1zM248,375h1v1h-1zM272,422h1v1h-1zM104,437h1v1h-1zM305,340h1v1h-1zM233,449h1v1h-1zM515,374h1v1h-1zM152,412h1v1h-1zM163,493h1v1h-1zM277,385h1v1h-1zM167,469h1v1h-1zM420,359h1v1h-1zM274,397h1v1h-1zM377,359h1v1h-1zM321,341h1v1h-1zM236,360h1v1h-1zM91,527h1v1h-1zM449,336h1v1h-1zM228,375h1v1h-1zM332,376h1v1h-1zM137,401h1v1h-1zM415,387h1v1h-1zM427,330h1v1h-1zM202,452h1v1h-1zM196,412h1v1h-1zM276,375h1v1h-1zM337,436h1v1h-1zM134,425h1v1h-1zM433,339h1v1h-1zM262,425h1v1h-1zM150,496h1v1h-1zM294,373h1v1h-1zM192,479h1v1h-1zM334,342h1v1h-1zM169,424h1v1h-1zM161,395h1v1h-1zM248,397h1v1h-1zM320,338h1v1h-1zM372,378h1v1h-1zM232,364h1v1h-1zM193,387h1v1h-1zM67,432h1v1h-1zM468,344h1v1h-1zM302,351h1v1h-1zM424,361h1v1h-1zM216,420h1v1h-1zM372,382h1v1h-1zM327,426h1v1h-1zM459,379h1v1h-1zM344,431h1v1h-1zM77,468h1v1h-1zM501,353h1v1h-1zM122,464h1v1h-1zM401,409h1v1h-1zM57,516h1v1h-1zM183,458h1v1h-1zM399,415h1v1h-1zM303,393h1v1h-1zM213,463h1v1h-1zM495,341h1v1h-1zM183,391h1v1h-1zM211,419h1v1h-1zM259,455h1v1h-1zM445,330h1v1h-1zM271,415h1v1h-1zM219,398h1v1h-1zM63,455h1v1h-1zM73,455h1v1h-1zM178,490h1v1h-1zM277,432h1v1h-1zM294,400h1v1h-1zM366,395h1v1h-1zM123,431h1v1h-1zM160,499h1v1h-1zM321,417h1v1h-1zM74,510h1v1h-1zM284,455h1v1h-1zM264,423h1v1h-1zM381,391h1v1h-1zM86,504h1v1h-1zM432,330h1v1h-1zM266,409h1v1h-1zM105,460h1v1h-1zM169,410h1v1h-1zM250,454h1v1h-1zM373,417h1v1h-1zM341,399h1v1h-1zM221,371h1v1h-1zM367,399h1v1h-1zM340,438h1v1h-1zM270,416h1v1h-1zM355,395h1v1h-1zM225,452h1v1h-1zM334,419h1v1h-1zM477,295h1v1h-1zM207,478h1v1h-1zM240,431h1v1h-1zM99,462h1v1h-1zM112,460h1v1h-1zM432,405h1v1h-1zM146,423h1v1h-1zM60,533h1v1h-1zM191,433h1v1h-1zM179,388h1v1h-1zM218,454h1v1h-1zM334,415h1v1h-1zM80,509h1v1h-1zM419,370h1v1h-1zM348,345h1v1h-1zM180,423h1v1h-1zM87,451h1v1h-1zM156,462h1v1h-1zM204,469h1v1h-1zM488,383h1v1h-1zM96,427h1v1h-1zM100,431h1v1h-1zM392,321h1v1h-1zM428,398h1v1h-1zM440,351h1v1h-1zM67,435h1v1h-1zM302,416h1v1h-1zM108,494h1v1h-1zM209,431h1v1h-1zM249,383h1v1h-1zM189,415h1v1h-1zM418,333h1v1h-1zM54,519h1v1h-1zM83,429h1v1h-1zM342,436h1v1h-1zM193,399h1v1h-1zM123,464h1v1h-1zM252,457h1v1h-1zM202,429h1v1h-1zM102,485h1v1h-1zM466,373h1v1h-1zM163,484h1v1h-1zM397,336h1v1h-1zM78,529h1v1h-1zM85,427h1v1h-1zM469,305h1v1h-1zM222,410h1v1h-1zM344,342h1v1h-1zM306,388h1v1h-1zM435,390h1v1h-1zM169,476h1v1h-1zM55,495h1v1h-1zM381,345h1v1h-1zM281,407h1v1h-1zM96,466h1v1h-1zM77,532h1v1h-1zM237,375h1v1h-1zM152,408h1v1h-1zM93,488h1v1h-1zM278,417h1v1h-1zM118,477h1v1h-1zM357,418h1v1h-1zM118,425h1v1h-1zM285,441h1v1h-1zM375,377h1v1h-1zM155,398h1v1h-1zM414,414h1v1h-1zM190,471h1v1h-1zM182,387h1v1h-1zM292,406h1v1h-1zM84,432h1v1h-1zM251,434h1v1h-1zM456,347h1v1h-1zM79,489h1v1h-1zM246,404h1v1h-1zM83,432h1v1h-1zM254,443h1v1h-1zM341,393h1v1h-1zM129,503h1v1h-1zM330,404h1v1h-1zM76,475h1v1h-1zM333,339h1v1h-1zM317,440h1v1h-1zM151,395h1v1h-1zM67,528h1v1h-1zM126,472h1v1h-1zM170,489h1v1h-1zM406,379h1v1h-1zM155,354h1v1h-1zM206,296h1v1h-1zM124,460h1v1h-1zM300,320h1v1h-1zM480,300h1v1h-1zM505,285h1v1h-1z" fill="#ffff00"/>
<polyline points="53.5,195.0 57.3,213.3 60.5,206.5 62.3,214.2 64.6,203.7 68.3,203.3 71.9,203.7 74.7,207.4 76.9,205.1 81.5,206.5 83.3,216.5 88.4,205.5 93.4,217.4 98.4,203.7 100.2,214.2 102.5,208.3 107.1,221.5 110.3,205.1 114.8,215.1 119.4,211.5 123.1,212.9 126.7,209.7 129.5,201.4 131.7,215.1 136.3,223.4 138.6,206.9 140.9,217.4 143.6,208.3 145.9,215.1 148.2,216.5 152.3,231.1 159.1,218.3 161.4,219.2 164.6,234.8 166.9,219.7 170.3,216.0 174.6,230.4 181.5,216.5 187.9,235.2 190.6,231.4 195.4,237.8 197.5,234.1 200.7,248.5 202.8,230.4 206.6,231.4 212.4,228.2 219.4,247.4 223.6,231.4 226.8,250.1 231.6,230.9 234.3,249.6 236.4,245.3 240.7,248.5 245.5,267.7 250.8,241.6 255.6,259.1 257.7,247.4 262.5,263.4 264.6,257.0 266.8,261.3 270.0,258.6 271.6,263.9 278.0,269.3 284.3,264.3 288.5,266.8 291.0,270.4 293.4,282.6 295.8,268.6 299.5,266.2 302.5,268.0 306.2,279.6 309.2,268.6 312.9,280.2 316.5,285.0 320.2,280.8 323.2,278.3 326.2,286.2 328.7,277.7 332.3,283.2 337.2,285.6 340.8,289.9 343.3,285.0 347.5,298.4 350.6,296.0 354.2,296.0 357.9,288.7 360.9,299.6 364.0,302.7 366.4,289.9 369.4,306.9 371.3,292.9 373.7,306.9 376.8,301.5 383.4,306.9 387.1,315.5 390.1,317.3 404.6,317.0 407.4,309.2 410.1,322.9 413.8,313.8 417.1,328.4 419.2,318.3 422.0,325.6 423.8,323.8 428.4,327.5 433.0,333.9 435.7,350.3 442.1,331.7 445.7,339.4 448.5,333.0 452.1,342.1 459.5,349.4 464.9,344.8 469.5,354.9 475.9,356.7 480.5,368.6 484.1,358.5 489.6,374.1 492.4,368.6 495.1,372.3 497.8,367.7 502.4,378.6 507.0,385.0 516.1,394.2 521.6,389.6 525.3,402.4" fill="none" stroke="#3ab8f0" stroke-width="1.0" stroke-linejoin="round" opacity="0.55"/>
<polyline points="53.5,195.0 57.3,213.3 60.5,206.5 62.3,214.2 64.6,203.7 68.3,203.3 71.9,203.7 74.7,207.4 76.9,205.1 81.5,206.5 83.3,216.5 88.4,205.5 93.4,217.4 98.4,203.7 100.2,214.2 102.5,208.3 107.1,221.5 110.3,205.1 114.8,215.1 119.4,211.5 123.1,212.9 126.7,209.7 129.5,201.4 131.7,215.1 136.3,223.4 138.6,206.9 140.9,217.4 143.6,208.3 145.9,215.1 148.2,216.5 152.3,231.1 159.1,218.3 161.4,219.2 164.6,234.8 166.9,219.7 170.3,216.0 174.6,230.4 181.5,216.5 187.9,235.2 190.6,231.4 195.4,237.8 197.5,234.1 200.7,248.5 202.8,230.4 206.6,231.4 212.4,228.2 219.4,247.4 223.6,231.4 226.8,250.1 231.6,230.9 234.3,249.6 236.4,245.3 240.7,248.5 245.5,267.7 250.8,241.6 255.6,259.1 257.7,247.4 262.5,263.4 264.6,257.0 266.8,261.3 270.0,258.6 271.6,263.9 278.0,269.3 284.3,264.3 288.5,266.8 291.0,270.4 293.4,282.6 295.8,268.6 299.5,266.2 302.5,268.0 306.2,279.6 309.2,268.6 312.9,280.2 316.5,285.0 320.2,280.8 323.2,278.3 326.2,286.2 328.7,277.7 332.3,283.2 337.2,285.6 340.8,289.9 343.3,285.0 347.5,298.4 350.6,296.0 354.2,296.0 357.9,288.7 360.9,299.6 364.0,302.7 366.4,289.9 369.4,306.9 371.3,292.9 373.7,306.9 376.8,301.5 383.4,306.9 387.1,315.5 390.1,317.3 404.6,317.0 407.4,309.2 410.1,322.9 413.8,313.8 417.1,328.4 419.2,318.3 422.0,325.6 423.8,323.8 428.4,327.5 433.0,333.9 435.7,350.3 442.1,331.7 445.7,339.4 448.5,333.0 452.1,342.1 459.5,349.4 464.9,344.8 469.5,354.9 475.9,356.7 480.5,368.6 484.1,358.5 489.6,374.1 492.4,368.6 495.1,372.3 497.8,367.7 502.4,378.6 507.0,385.0 516.1,394.2 521.6,389.6 525.3,402.4" fill="none" stroke="#18b0f8" stroke-width="1.0" shape-rendering="crispEdges"/>
</svg><div class="a" style="left:20px;top:168px;width:28px;text-align:right;font-size:11px;line-height:12px">200</div>
<div class="a" style="left:20px;top:274px;width:28px;text-align:right;font-size:11px;line-height:12px">150</div>
<div class="a" style="left:20px;top:381px;width:28px;text-align:right;font-size:11px;line-height:12px">100</div>
<div class="a" style="left:20px;top:487px;width:28px;text-align:right;font-size:11px;line-height:12px">50</div>
<div class="a" style="left:531px;top:168px;font-size:11px;line-height:12px">40</div>
<div class="a" style="left:531px;top:274px;font-size:11px;line-height:12px">30</div>
<div class="a" style="left:531px;top:381px;font-size:11px;line-height:12px">20</div>
<div class="a" style="left:531px;top:487px;font-size:11px;line-height:12px">10</div>
<div class="a" style="left:54px;top:161px;font-size:11px;line-height:12px">MB/s</div>
<div class="a" style="left:512px;top:161px;font-size:11px;line-height:12px">ms</div>
<div class="a" style="left:33.5px;top:605px;width:40px;text-align:center;font-size:11px;line-height:12px">0</div>
<div class="a" style="left:80.8px;top:605px;width:40px;text-align:center;font-size:11px;line-height:12px">300</div>
<div class="a" style="left:128.1px;top:605px;width:40px;text-align:center;font-size:11px;line-height:12px">600</div>
<div class="a" style="left:175.4px;top:605px;width:40px;text-align:center;font-size:11px;line-height:12px">900</div>
<div class="a" style="left:222.7px;top:605px;width:40px;text-align:center;font-size:11px;line-height:12px">1200</div>
<div class="a" style="left:270.0px;top:605px;width:40px;text-align:center;font-size:11px;line-height:12px">1500</div>
<div class="a" style="left:317.3px;top:605px;width:40px;text-align:center;font-size:11px;line-height:12px">1800</div>
<div class="a" style="left:364.6px;top:605px;width:40px;text-align:center;font-size:11px;line-height:12px">2100</div>
<div class="a" style="left:411.9px;top:605px;width:40px;text-align:center;font-size:11px;line-height:12px">2400</div>
<div class="a" style="left:459.2px;top:605px;width:40px;text-align:center;font-size:11px;line-height:12px">2700</div>
<div class="a" style="left:507.5px;top:605px;font-size:11px;line-height:12px">3000gB</div>
<div class="btn" style="left:569px;top:155px;width:73px;height:19px;border-color:#3c7fb1;box-shadow:0 0 0 1px #7ad0f8 inset;background:linear-gradient(#eaf6fd,#d9f0fc 50%,#bee6fd 50%,#a7d9f5)"></div>
<div class="a cj" style="left:593px;top:159px;">开始</div>
<div class="sep" style="left:560px;top:184px;width:102px"></div>
<div class="a" style="left:565px;top:191px;width:12px;height:12px;border-radius:50%;border:1px solid #8a8a8a;background:radial-gradient(circle at 50% 50%,#2a7fd0 0,#1860b0 2.5px,#e8e8e8 3.5px,#f8f8f8 100%)"></div>
<div class="a cj" style="left:581px;top:192px;">读取</div>
<div class="a" style="left:565px;top:206px;width:12px;height:12px;border-radius:50%;border:1px solid #8a8a8a;background:radial-gradient(circle at 40% 40%,#fff,#d8d8d8)"></div>
<div class="a cj" style="left:581px;top:207px;">写入</div>
<div class="sep" style="left:560px;top:220px;width:102px"></div>
<div class="chk" style="left:565px;top:227px"></div>
<div class="a cj" style="left:581px;top:228px;">快捷行程</div>
<div class="edit" style="left:565px;top:246px;width:62px;height:18px;border-color:#c8c8c8"></div>
<div class="a" style="left:610px;top:247px;width:15px;height:16px;border:1px solid #a8a8a8;background:linear-gradient(#f8f8f8,#e8e8e8 45%,#c8c8c8 50%,#f0f0f0 55%,#fafafa)"></div><svg class="a" style="left:610px;top:247px" width="15" height="16"><path d="M4.5,6.5l3,-3l3,3z M4.5,10l3,3l3,-3z" fill="#b0b0b0"/></svg>
<div class="a cj" style="left:569px;top:251px;color:#8c8c8c;font-size:11px;line-height:11px;font-family:'Liberation Sans';letter-spacing:0;-webkit-text-stroke:0">40</div>
<div class="a mono" style="left:638px;top:251px;font-size:12px;line-height:12px;transform:scaleX(.833);transform-origin:0 0;-webkit-text-stroke:0.3px #000">gB</div>
<div class="chk on" style="left:565px;top:272px"></div>
<div class="a cj" style="left:581px;top:274px;">传输速率</div>
<div class="sep" style="left:560px;top:285px;width:102px"></div>
<div class="a cj" style="left:565px;top:289px;">最低</div>
<div class="blk" style="left:565px;top:303px;width:92px;height:14px;color:#20c0f8">92.6 MB/s</div>
<div class="a cj" style="left:565px;top:319px;">最高</div>
<div class="blk" style="left:565px;top:333px;width:92px;height:14px;color:#20c0f8">190.0 MB/s</div>
<div class="a cj" style="left:565px;top:349px;">平均</div>
<div class="blk" style="left:565px;top:362px;width:92px;height:13px;color:#20c0f8">151.8 MB/s</div>
<div class="sep" style="left:560px;top:382px;width:102px"></div>
<div class="chk on" style="left:565px;top:388px"></div>
<div class="a cj" style="left:581px;top:390px;">存取时间</div>
<div class="blk" style="left:565px;top:402px;width:92px;height:14px;color:#f8f020">16.2 ms</div>
<div class="chk on" style="left:565px;top:419px"></div>
<div class="a cj" style="left:581px;top:421px;">突发传输速率</div>
<div class="blk" style="left:565px;top:433px;width:92px;height:14px;color:#fff">183.5 MB/s</div>
<div class="a mono" style="left:565px;top:452px;font-size:12px;line-height:12px;transform:scaleX(.833);transform-origin:0 0;-webkit-text-stroke:0.3px #000">CPU</div>
<div class="a cj" style="left:589px;top:452px;">占用</div>
<div class="blk" style="left:565px;top:463px;width:92px;height:14px;color:#fff">14.8%</div>
<div class="a cj" style="left:565px;top:491px;">通行数</div>
<div class="edit" style="left:565px;top:504px;width:78px;height:18px"></div>
<div class="a" style="left:626px;top:506px;width:15px;height:15px;border:1px solid #a8a8a8;background:linear-gradient(#f8f8f8,#e8e8e8 45%,#c8c8c8 50%,#f0f0f0 55%,#fafafa)"></div><svg class="a" style="left:626px;top:506px" width="15" height="15"><path d="M4.5,5.5l3,-3l3,3z M4.5,9l3,3l3,-3z" fill="#4d61a8"/></svg>
<div class="a cj" style="left:569px;top:509px;font-size:11px;line-height:11px;font-family:'Liberation Sans';letter-spacing:0;-webkit-text-stroke:0">1</div>
<div class="a" style="left:565px;top:529px;width:54px;height:12px;border:1px solid #8a8a8a;border-radius:2px;background:linear-gradient(#a8f0a8 0%,#70e070 40%,#18c018 50%,#10b010 100%)"></div>
<div class="a mono" style="left:625px;top:531px;font-size:12px;line-height:12px;transform:scaleX(.833);transform-origin:0 0;-webkit-text-stroke:0.3px #000">1/1</div>
<div class="tab" style="left:134px;top:124px;width:86px;height:20px"></div>
<svg class="a" style="left:154px;top:126px" width="9" height="16" viewBox="0 0 9 16">
<circle cx="4.5" cy="2.6" r="2.2" fill="#30a0f0" stroke="#00206a" stroke-width="0.8"/>
<path d="M1.5,6h5v8h2v1.5h-8v-1.5h2v-6.5h-1z" fill="#1878e0" stroke="#00206a" stroke-width="0.8"/>
</svg>
<div class="a cj" style="left:176px;top:129px;">信息</div>
<div class="tab" style="left:220px;top:124px;width:111px;height:20px"></div>
<svg class="a" style="left:240px;top:126px" width="16" height="16" viewBox="0 0 16 16">
<path d="M5.5,0.5h5v5h5v5h-5v5h-5v-5h-5v-5h5z" fill="#e01818" stroke="#700" stroke-width="1"/>
</svg>
<div class="a cj" style="left:262px;top:129px;">健康状态</div>
<div class="tab" style="left:331px;top:124px;width:111px;height:20px"></div>
<svg class="a" style="left:351px;top:126px" width="16" height="16" viewBox="0 0 16 16">
<path d="M8,8l6,6" stroke="#0a1a80" stroke-width="3.6" stroke-linecap="round"/>
<circle cx="5.5" cy="5.5" r="4.8" fill="#30c030" stroke="#105010" stroke-width="1"/>
<circle cx="4.5" cy="4.3" r="1.6" fill="#b0f0a0"/>
</svg>
<div class="a cj" style="left:373px;top:129px;">错误扫描</div>
<div class="tab" style="left:442px;top:124px;width:136px;height:20px"></div>
<svg class="a" style="left:463px;top:126px" width="14" height="16" viewBox="0 0 14 16">
<path d="M0.5,2.5h5l1,1.5h6.5v11.5h-12.5z" fill="#d8b030" stroke="#403000"/>
<rect x="2.5" y="5.5" width="11" height="10" fill="#e8c020" stroke="#403000"/>
</svg>
<div class="a cj" style="left:485px;top:129px;">文件夹占用率</div>
<div class="tab" style="left:578px;top:124px;width:84px;height:20px"></div>
<svg class="a" style="left:597px;top:126px" width="14" height="17" viewBox="0 0 14 17">
<rect x="0.5" y="1.5" width="13" height="3" fill="#505050" stroke="#000"/>
<path d="M1.5,4.5h11l-1,12h-9z" fill="#707070" stroke="#000"/>
<path d="M4.5,6v9M7,6v9M9.5,6v9" stroke="#c0c0c0" stroke-width="1"/>
</svg>
<div class="a cj" style="left:619px;top:129px;">擦除</div>
<div class="tab sel" style="left:19px;top:121px;width:116px;height:24px"></div>
<svg class="a" style="left:44px;top:124px" width="9" height="16" viewBox="0 0 9 16">
<path d="M1,4a3.5,3.5 0 0 1 7,0l-1.6,7h-3.8z" fill="#e8e020" stroke="#303000" stroke-width="0.9"/>
<circle cx="4.5" cy="13.6" r="1.8" fill="#e8e020" stroke="#303000" stroke-width="0.9"/>
</svg>
<div class="a cj" style="left:65px;top:127px;">基准测试</div>
</div>
<div class="win" style="left:689px;top:1px">
<div class="frame" style="border-color:#0e1520;background:linear-gradient(90deg,rgba(255,255,255,0) 0,rgba(255,255,255,0.12) 25%,rgba(255,255,255,0) 45%,rgba(255,255,255,0.18) 75%,rgba(255,255,255,0) 100%),linear-gradient(#b4bcc6 0px,#a8b2be 172px,#c8d0d8 177px,#3c4c62 178px,#44566e 260px,#4a5c74 100%)">
<div class="a" style="left:0;top:0;width:681px;height:29px;background:linear-gradient(rgba(255,255,255,0.08),rgba(255,255,255,0) 50%,rgba(0,0,0,0.05)),linear-gradient(90deg,#a8b4c2 0,#bcc6d2 40px,#c0cad6 200px,#b0bcca 268px,#52627a 296px,#3a4a62 340px,#34445c 500px,#3e506a 560px,#3a4a62 100%)"></div>
</div>
<div class="a" style="left:574px;top:9px;width:103px;height:20px;border:1px solid #2b3442;border-top:none;border-radius:0 0 5px 5px;overflow:hidden;z-index:5">
<div class="a" style="left:0;top:0;width:27px;height:19px;background:linear-gradient(#c5cdd6 0%,#9aa6b4 45%,#6e7e92 50%,#7a8aa0 100%);border-right:1px solid #2b3442"></div>
<div class="a" style="left:27px;top:0;width:28px;height:19px;background:linear-gradient(#c5cdd6 0%,#9aa6b4 45%,#6e7e92 50%,#7a8aa0 100%);border-right:1px solid #2b3442"></div>
<div class="a" style="left:55px;top:0;width:47px;height:19px;background:linear-gradient(#e8a89c 0%,#d8806c 45%,#c13a22 50%,#d06048 100%)"></div>
<div class="a" style="left:9px;top:10px;width:10px;height:4px;background:#fff;border:1px solid #4a5566"></div>
<div class="a" style="left:36px;top:5px;width:11px;height:9px;border:1px solid #4a5566;background:#fff"><div class="a" style="left:1px;top:2px;width:7px;height:3px;background:#8090a4;border:1px solid #4a5566"></div></div>
<svg class="a" style="left:72px;top:4px" width="14" height="12" viewBox="0 0 14 12"><path d="M2.5,1.5 L11.5,10.5 M11.5,1.5 L2.5,10.5" stroke="#3a2a30" stroke-width="4" stroke-linecap="square"/><path d="M2.5,1.5 L11.5,10.5 M11.5,1.5 L2.5,10.5" stroke="#fff" stroke-width="2.4" stroke-linecap="square"/></svg>
</div>
<svg class="a" style="left:8px;top:16px" width="16" height="15" viewBox="0 0 16 15">
<polygon points="8.4,0.8 15.2,5.4 7.4,13.9 0.8,8.8" fill="#2e2a2a" stroke="#1a1818" stroke-width="0.8" stroke-linejoin="round"/>
<polygon points="4.5,9.5 8,7.5 10,10 7.4,12.6" fill="#8a7a78"/>
<circle cx="9" cy="5.8" r="3.9" fill="#f0b850"/>
<circle cx="9" cy="5.6" r="2.6" fill="#f8d890"/>
<circle cx="9" cy="5.8" r="0.9" fill="#9a8aa0"/>
</svg>
<div class="a" style="left:30px;top:17px;white-space:nowrap;line-height:14px;color:#111"><span style="font-size:12.5px">HD Tune Pro 5.70 - </span><span style="font-size:12.5px">硬盘/固态硬盘实用程序</span></div>
<div class="client"></div>
<div class="a" style="left:8px;top:39px;width:668px;height:19px;background:linear-gradient(#e6ecf4,#dbe4ee)"></div>
<div class="a cj" style="left:15px;top:42px;">文件<span class="as">(</span><u><span class="as">F</span></u><span class="as">)</span></div>
<div class="a cj" style="left:71px;top:42px;">帮助<span class="as">(</span><u><span class="as">H</span></u><span class="as">)</span></div>
<div class="a" style="left:8px;top:58px;width:668px;height:41px;background:linear-gradient(#f7f7f7 0%,#efefef 40%,#dcdcdc 100%);border-bottom:1px solid #1a1a1a"></div>
<div class="a" style="left:19px;top:67px;width:314px;height:20px;border:1px solid #8b8b8b;border-radius:3px;background:linear-gradient(#f5f5f5 0%,#ececec 48%,#dedede 52%,#d2d2d2 100%)"></div>
<div class="a mono" style="left:23px;top:73px;font-size:12px;line-height:12px;transform:scaleX(0.833);transform-origin:0 0;letter-spacing:0px;-webkit-text-stroke:0.3px #000">TOSHIBA DT01ACA300 (3000 gB)</div>
<svg class="a" style="left:320px;top:75px" width="8" height="5"><path d="M0,0h8l-4,4.5z" fill="#000"/></svg>
<div class="tbtn" style="left:344px;top:65px"></div>
<svg class="a" style="left:353px;top:68px" width="10" height="17" viewBox="0 0 10 17">
<rect x="3" y="0.5" width="4" height="12" rx="1.5" fill="#e01010" stroke="#600" stroke-width="0.7"/>
<rect x="3.5" y="1" width="3" height="3" fill="#40d0e0"/>
<circle cx="5" cy="13" r="3.6" fill="#e01010" stroke="#600" stroke-width="0.7"/>
<circle cx="4" cy="12.3" r="1" fill="#fff" opacity="0.8"/>
</svg>
<div class="a" style="left:373px;top:70px;font-family:'Liberation Serif',serif;font-weight:bold;font-size:13px;line-height:13px">21℃</div>
<div class="tbtn" style="left:447px;top:65px;border-color:#3c7fb1;box-shadow:inset 0 0 0 1px #a8d8f8;background:linear-gradient(#eaf6fd,#d9f0fc 50%,#bee6fd 50%,#a7d9f5)"></div>
<div class="tbtn" style="left:477px;top:65px;"></div>
<div class="tbtn" style="left:507px;top:65px;"></div>
<div class="tbtn" style="left:537px;top:65px;"></div>
<div class="tbtn" style="left:572px;top:65px;"></div>
<svg class="a" style="left:452px;top:68px" width="18" height="17" viewBox="0 0 18 17">
<path d="M1.5,1.5h5l2.5,2.5v9.5h-7.5z" fill="#fff" stroke="#000" stroke-width="1.1"/>
<path d="M8.5,4.5h5l2.5,2.5v9h-7.5z" fill="#fff" stroke="#000" stroke-width="1.1"/>
<path d="M16.8,7.5v9.2h-7.5" stroke="#303030" stroke-width="0.9" fill="none"/>
<path d="M2.5,5.5h4.5M2.5,7.5h4.5M2.5,9.5h4.5M9.5,8.5h5M9.5,10.5h5M9.5,12.5h5" stroke="#2890f0" stroke-width="1.1" fill="none"/>
</svg>
<svg class="a" style="left:482px;top:68px" width="18" height="17" viewBox="0 0 18 17">
<path d="M1.5,1.5h5l2.5,2.5v9.5h-7.5z" fill="#fff" stroke="#000" stroke-width="1.1"/>
<path d="M8.5,4.5h5l2.5,2.5v9h-7.5z" fill="#fff" stroke="#000" stroke-width="1.1"/>
<path d="M16.8,7.5v9.2h-7.5" stroke="#303030" stroke-width="0.9" fill="none"/>
<rect x="2.5" y="5" width="4.5" height="5" fill="#20c040"/><rect x="3.5" y="6.5" width="2" height="2" fill="#e02020"/><rect x="9.5" y="7" width="4.5" height="5.5" fill="#20c040"/><rect x="10.5" y="8.5" width="2.2" height="2.2" fill="#e02020"/>
</svg>
<svg class="a" style="left:512px;top:69px" width="17" height="14" viewBox="0 0 17 14">
<rect x="0.5" y="4" width="15.5" height="9.5" rx="2" fill="#383838"/>
<path d="M5,4.5v-2.5h6v2.5" stroke="#383838" stroke-width="1.5" fill="none"/>
<circle cx="7.8" cy="8.6" r="3.3" fill="#f0f0f0"/><circle cx="7.8" cy="8.6" r="1.9" fill="#a8a8a8"/>
<circle cx="13.5" cy="6.5" r="1" fill="#30e030"/>
</svg>
<svg class="a" style="left:542px;top:68px" width="18" height="17" viewBox="0 0 18 17">
<circle cx="6" cy="6" r="4.2" fill="#e8e010" stroke="#7a7000" stroke-width="0.8"/>
<circle cx="6" cy="6" r="5.3" fill="none" stroke="#d8d000" stroke-width="2" stroke-dasharray="1.8 1.6"/>
<circle cx="11.5" cy="11" r="4.2" fill="#e8e010" stroke="#7a7000" stroke-width="0.8"/>
<circle cx="11.5" cy="11" r="5.3" fill="none" stroke="#d8d000" stroke-width="2" stroke-dasharray="1.8 1.6"/>
<path d="M6,3.5v4M11.5,8.5v4" stroke="#707070" stroke-width="1.6"/>
</svg>
<svg class="a" style="left:576px;top:67px" width="20" height="20" viewBox="0 0 20 20">
<defs><linearGradient id="pg" x1="0" y1="0" x2="1" y2="1"><stop offset="0" stop-color="#e050f0"/><stop offset="1" stop-color="#8a00a8"/></linearGradient></defs>
<rect x="0.5" y="0.5" width="19" height="19" rx="2" fill="url(#pg)" stroke="#6a0080"/>
<path d="M10,3.5v10.5M4.8,9l5.2,5.5l5.2,-5.5" stroke="#fff" stroke-width="2.6" fill="none" stroke-linejoin="miter"/>
</svg>
<div class="btn" style="left:612px;top:65px;width:52px;height:24px;border-color:#8e8f8f"></div>
<div class="a cj" style="left:627px;top:71px;font-size:13px;line-height:13px">退出</div>
<div class="tab" style="left:22px;top:103px;width:121px;height:21px"></div>
<svg class="a" style="left:46px;top:105px" width="14" height="16" viewBox="0 0 14 16">
<path d="M1,0.5h9l3,3v12H1z" fill="#fff" stroke="#000"/>
<ellipse cx="7" cy="6" rx="2.6" ry="4" fill="#c020c0"/><circle cx="7" cy="12.5" r="1.6" fill="#c020c0"/>
</svg>
<div class="a cj" style="left:70px;top:108px;">文件基准</div>
<div class="tab" style="left:144px;top:103px;width:133px;height:21px"></div>
<svg class="a" style="left:168px;top:105px" width="16" height="16" viewBox="0 0 16 16">
<rect x="0.5" y="0.5" width="15" height="15" fill="#f8f4c0" stroke="#000"/>
<rect x="2" y="9" width="2" height="6" fill="#20c020"/><rect x="4" y="11" width="2" height="4" fill="#2040e0"/>
<rect x="6" y="6" width="2" height="9" fill="#20c020"/><rect x="8" y="8" width="2" height="7" fill="#2040e0"/>
<rect x="10" y="10" width="2" height="5" fill="#20c020"/><rect x="12" y="7" width="2" height="8" fill="#2040e0"/>
</svg>
<div class="a cj" style="left:192px;top:108px;">磁盘监视器</div>
<div class="tab" style="left:278px;top:103px;width:143px;height:21px"></div>
<svg class="a" style="left:301px;top:105px" width="17" height="16" viewBox="0 0 17 16">
<path d="M1,5h4l5,-4v14l-5,-4H1z" fill="#f0d020" stroke="#000" stroke-width="1"/>
<path d="M12,5q2,3 0,6M14,3q3.5,5 0,10" stroke="#000" stroke-width="1.1" fill="none"/>
</svg>
<div class="a cj" style="left:325px;top:108px;">自动噪音管理</div>
<div class="tab" style="left:422px;top:103px;width:121px;height:21px"></div>
<svg class="a" style="left:446px;top:105px" width="16" height="16" viewBox="0 0 16 16">
<rect x="0.5" y="0.5" width="15" height="15" fill="#fbf3c8" stroke="#000"/><rect x="3" y="11" width="1.2" height="1.2" fill="#e02020"/><rect x="5" y="9" width="1.2" height="1.2" fill="#2040e0"/><rect x="7" y="10" width="1.2" height="1.2" fill="#e02020"/><rect x="9" y="6" width="1.2" height="1.2" fill="#2040e0"/><rect x="10" y="9" width="1.2" height="1.2" fill="#e02020"/><rect x="12" y="4" width="1.2" height="1.2" fill="#2040e0"/><rect x="4" y="13" width="1.2" height="1.2" fill="#e02020"/><rect x="8" y="12" width="1.2" height="1.2" fill="#e02020"/><rect x="11" y="11" width="1.2" height="1.2" fill="#e02020"/><rect x="6" y="7" width="1.2" height="1.2" fill="#2040e0"/>
</svg>
<div class="a cj" style="left:470px;top:108px;">随机存取</div>
<div class="tab" style="left:544px;top:103px;width:119px;height:21px"></div>
<svg class="a" style="left:567px;top:105px" width="16" height="16" viewBox="0 0 16 16">
<rect x="0.5" y="0.5" width="15" height="15" fill="#f8f4c0" stroke="#000"/>
<rect x="1" y="9" width="2" height="6" fill="#20c020"/><rect x="3" y="11" width="2" height="4" fill="#2040e0"/>
<rect x="6" y="6" width="9" height="9" fill="#fff" stroke="#2040e0" stroke-width="0.8"/>
<path d="M8,8h1M10,8h1M12,8h1M8,10h1M10,10h1M12,10h1M8,12h1M10,12h1M12,12h1" stroke="#e02020" stroke-width="1"/>
</svg>
<div class="a cj" style="left:591px;top:108px;">附加测试</div>
<div class="panel" style="left:19px;top:143px;width:646px;height:484px"></div>
<svg class="a" style="left:0;top:0" width="680" height="657"><rect x="29" y="151" width="500" height="400" fill="#00ff00"/><path d="M29.5,151v401M39.5,151v401M49.5,151v401M59.5,151v401M69.5,151v401M79.5,151v401M89.5,151v401M99.5,151v401M109.5,151v401M119.5,151v401M129.5,151v401M139.5,151v401M149.5,151v401M159.5,151v401M169.5,151v401M179.5,151v401M189.5,151v401M199.5,151v401M209.5,151v401M219.5,151v401M229.5,151v401M239.5,151v401M249.5,151v401M259.5,151v401M269.5,151v401M279.5,151v401M289.5,151v401M299.5,151v401M309.5,151v401M319.5,151v401M329.5,151v401M339.5,151v401M349.5,151v401M359.5,151v401M369.5,151v401M379.5,151v401M389.5,151v401M399.5,151v401M409.5,151v401M419.5,151v401M429.5,151v401M439.5,151v401M449.5,151v401M459.5,151v401M469.5,151v401M479.5,151v401M489.5,151v401M499.5,151v401M509.5,151v401M519.5,151v401M529.5,151v401M29,151.5h501M29,159.5h501M29,167.5h501M29,175.5h501M29,183.5h501M29,191.5h501M29,199.5h501M29,207.5h501M29,215.5h501M29,223.5h501M29,231.5h501M29,239.5h501M29,247.5h501M29,255.5h501M29,263.5h501M29,271.5h501M29,279.5h501M29,287.5h501M29,295.5h501M29,303.5h501M29,311.5h501M29,319.5h501M29,327.5h501M29,335.5h501M29,343.5h501M29,351.5h501M29,359.5h501M29,367.5h501M29,375.5h501M29,383.5h501M29,391.5h501M29,399.5h501M29,407.5h501M29,415.5h501M29,423.5h501M29,431.5h501M29,439.5h501M29,447.5h501M29,455.5h501M29,463.5h501M29,471.5h501M29,479.5h501M29,487.5h501M29,495.5h501M29,503.5h501M29,511.5h501M29,519.5h501M29,527.5h501M29,535.5h501M29,543.5h501M29,551.5h501" stroke="#080010" stroke-width="1"/></svg>
<div class="a" style="left:23px;top:564px;width:513px;height:50px;border:1px solid #8a8a8a;background:#fff"></div>
<div class="btn" style="left:569px;top:155px;width:73px;height:19px;border-color:#8e8f8f"></div>
<div class="a cj" style="left:593px;top:159px;">开始</div>
<div class="chk" style="left:565px;top:182px"></div>
<div class="a cj" style="left:581px;top:183px;">快速扫描</div>
<div class="btn" style="left:566px;top:200px;width:76px;height:19px;border-color:#8e8f8f"></div>
<div class="a cj" style="left:586px;top:204px;">速度图</div>
<div class="a cj" style="left:550px;top:233px;">开始</div>
<div class="edit" style="left:575px;top:229px;width:84px;height:18px"></div>
<div class="a" style="left:642px;top:231px;width:15px;height:14px;border:1px solid #a8a8a8;background:linear-gradient(#f8f8f8,#e8e8e8 45%,#c8c8c8 50%,#f0f0f0 55%,#fafafa)"></div><svg class="a" style="left:642px;top:231px" width="15" height="14"><path d="M4.5,5.5l3,-3l3,3z M4.5,9l3,3l3,-3z" fill="#4d61a8"/></svg>
<div class="a cj" style="left:578px;top:234px;font-size:11px;line-height:11px;font-family:'Liberation Sans';letter-spacing:0;-webkit-text-stroke:0">0</div>
<div class="a cj" style="left:550px;top:253px;">结束</div>
<div class="edit" style="left:575px;top:250px;width:84px;height:18px"></div>
<div class="a" style="left:642px;top:252px;width:15px;height:14px;border:1px solid #a8a8a8;background:linear-gradient(#f8f8f8,#e8e8e8 45%,#c8c8c8 50%,#f0f0f0 55%,#fafafa)"></div><svg class="a" style="left:642px;top:252px" width="15" height="14"><path d="M4.5,5.5l3,-3l3,3z M4.5,9l3,3l3,-3z" fill="#4d61a8"/></svg>
<div class="a cj" style="left:578px;top:255px;font-size:11px;line-height:11px;font-family:'Liberation Sans';letter-spacing:0;-webkit-text-stroke:0">3000</div>
<div class="a cj" style="left:550px;top:277px;">单位</div>
<div class="btn" style="left:607px;top:275px;width:53px;height:19px;border-color:#8e8f8f"></div>
<div class="a mono" style="left:612px;top:280px;font-size:12px;line-height:12px;transform:scaleX(.833);transform-origin:0 0;-webkit-text-stroke:0.3px #000">gB</div>
<svg class="a" style="left:648px;top:283px" width="8" height="5"><path d="M0,0h8l-4,4.5z" fill="#000"/></svg>
<div class="a" style="left:551px;top:302px;width:110px;height:50px;border:1px solid #d5dfe5;border-radius:3px"></div>
<div class="a" style="left:556px;top:294px;width:29px;height:12px;background:#fff"></div>
<div class="a cj" style="left:558px;top:296px;">图例</div>
<div class="a" style="left:565px;top:312px;width:8px;height:8px;background:#808080;border:1px solid #000"></div>
<div class="a mono" style="left:580px;top:311px;font-size:12px;line-height:12px;transform:scaleX(.833);transform-origin:0 0;-webkit-text-stroke:0.3px #000">= 1144 MB</div>
<div class="a" style="left:565px;top:326px;width:8px;height:8px;background:#00ff00;border:1px solid #000"></div>
<div class="a cj" style="left:575px;top:324px;">确定</div>
<div class="a" style="left:565px;top:339px;width:8px;height:8px;background:#ff0000;border:1px solid #000"></div>
<div class="a cj" style="left:575px;top:337px;">损坏</div>
<div class="a" style="left:551px;top:359px;width:110px;height:119px;border:1px solid #d5dfe5;border-radius:3px"></div>
<div class="a cj" style="left:565px;top:361px;">损坏的块</div>
<div style="position:absolute;left:540px;width:108px;text-align:right;font-family:'Liberation Mono',monospace;font-weight:bold;font-size:12px;line-height:13px;letter-spacing:-0.1px;white-space:pre;top:376px">0.0 %</div>
<div class="a cj" style="left:565px;top:392px;">扫描速度</div>
<div style="position:absolute;left:540px;width:108px;text-align:right;font-family:'Liberation Mono',monospace;font-weight:bold;font-size:12px;line-height:13px;letter-spacing:-0.1px;white-space:pre;top:409px">131.5 MB/s</div>
<div class="a cj" style="left:565px;top:424px;">位置</div>
<div style="position:absolute;left:540px;width:108px;text-align:right;font-family:'Liberation Mono',monospace;font-weight:bold;font-size:12px;line-height:13px;letter-spacing:-0.1px;white-space:pre;top:438px">2999 gB</div>
<div class="a cj" style="left:565px;top:452px;">已用时间</div>
<div style="position:absolute;left:540px;width:108px;text-align:right;font-family:'Liberation Mono',monospace;font-weight:bold;font-size:12px;line-height:13px;letter-spacing:-0.1px;white-space:pre;top:466px">5:23:24</div>
<div class="tab" style="left:22px;top:124px;width:112px;height:20px"></div>
<svg class="a" style="left:43px;top:126px" width="9" height="16" viewBox="0 0 9 16">
<path d="M1,4a3.5,3.5 0 0 1 7,0l-1.6,7h-3.8z" fill="#e8e020" stroke="#303000" stroke-width="0.9"/>
<circle cx="4.5" cy="13.6" r="1.8" fill="#e8e020" stroke="#303000" stroke-width="0.9"/>
</svg>
<div class="a cj" style="left:65px;top:129px;">基准测试</div>
<div class="tab" style="left:134px;top:124px;width:86px;height:20px"></div>
<svg class="a" style="left:154px;top:126px" width="9" height="16" viewBox="0 0 9 16">
<circle cx="4.5" cy="2.6" r="2.2" fill="#30a0f0" stroke="#00206a" stroke-width="0.8"/>
<path d="M1.5,6h5v8h2v1.5h-8v-1.5h2v-6.5h-1z" fill="#1878e0" stroke="#00206a" stroke-width="0.8"/>
</svg>
<div class="a cj" style="left:176px;top:129px;">信息</div>
<div class="tab" style="left:220px;top:124px;width:111px;height:20px"></div>
<svg class="a" style="left:240px;top:126px" width="16" height="16" viewBox="0 0 16 16">
<path d="M5.5,0.5h5v5h5v5h-5v5h-5v-5h-5v-5h5z" fill="#e01818" stroke="#700" stroke-width="1"/>
</svg>
<div class="a cj" style="left:262px;top:129px;">健康状态</div>
<div class="tab" style="left:442px;top:124px;width:136px;height:20px"></div>
<svg class="a" style="left:463px;top:126px" width="14" height="16" viewBox="0 0 14 16">
<path d="M0.5,2.5h5l1,1.5h6.5v11.5h-12.5z" fill="#d8b030" stroke="#403000"/>
<rect x="2.5" y="5.5" width="11" height="10" fill="#e8c020" stroke="#403000"/>
</svg>
<div class="a cj" style="left:485px;top:129px;">文件夹占用率</div>
<div class="tab" style="left:578px;top:124px;width:84px;height:20px"></div>
<svg class="a" style="left:597px;top:126px" width="14" height="17" viewBox="0 0 14 17">
<rect x="0.5" y="1.5" width="13" height="3" fill="#505050" stroke="#000"/>
<path d="M1.5,4.5h11l-1,12h-9z" fill="#707070" stroke="#000"/>
<path d="M4.5,6v9M7,6v9M9.5,6v9" stroke="#c0c0c0" stroke-width="1"/>
</svg>
<div class="a cj" style="left:619px;top:129px;">擦除</div>
<div class="tab sel" style="left:329px;top:121px;width:115px;height:24px"></div>
<svg class="a" style="left:352px;top:124px" width="16" height="16" viewBox="0 0 16 16">
<path d="M8,8l6,6" stroke="#0a1a80" stroke-width="3.6" stroke-linecap="round"/>
<circle cx="5.5" cy="5.5" r="4.8" fill="#30c030" stroke="#105010" stroke-width="1"/>
<circle cx="4.5" cy="4.3" r="1.6" fill="#b0f0a0"/>
</svg>
<div class="a cj" style="left:373px;top:127px;">错误扫描</div>
</div>
</body></html>
